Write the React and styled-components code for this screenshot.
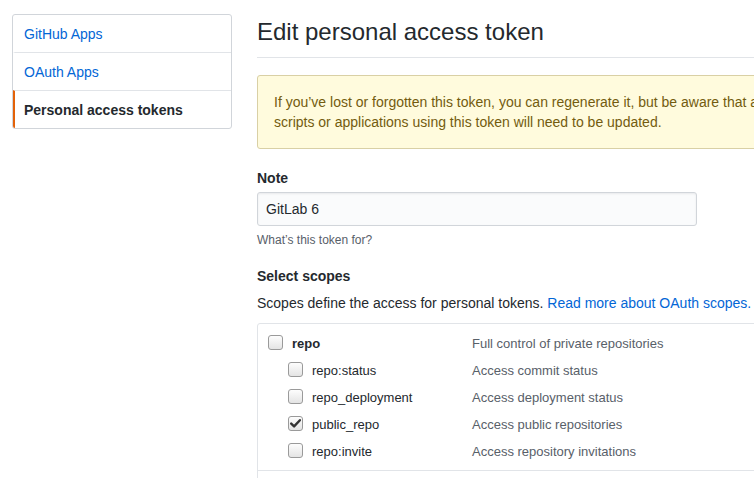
import React from "react";
import styled, { createGlobalStyle } from "styled-components";

const GlobalStyle = createGlobalStyle`
  html, body {
    margin: 0;
    padding: 0;
    background: #fff;
    overflow: hidden;
  }
  body {
    font-family: "Liberation Sans", Arial, sans-serif;
    font-size: 14px;
    line-height: 1.5;
    color: #24292e;
  }
`;

const menuItems = [
  { label: "GitHub Apps" },
  { label: "OAuth Apps" },
  { label: "Personal access tokens", selected: true },
];

const scopes = [
  { name: "repo", desc: "Full control of private repositories", parent: true },
  { name: "repo:status", desc: "Access commit status" },
  { name: "repo_deployment", desc: "Access deployment status" },
  { name: "public_repo", desc: "Access public repositories", checked: true },
  { name: "repo:invite", desc: "Access repository invitations" },
];

const Checkbox = ({ checked }) => (
  <Box>
    {checked && (
      <svg width="13" height="13" viewBox="0 0 13 13">
        <path
          d="M2.2 6.6 L5.1 9.4 L10.9 3.2"
          fill="none"
          stroke="#333"
          strokeWidth="2.4"
          strokeLinecap="round"
          strokeLinejoin="round"
        />
      </svg>
    )}
  </Box>
);

export default function App() {
  return (
    <>
      <GlobalStyle />
      <Page>
        <Sidebar>
          {menuItems.map((item) => (
            <MenuItem key={item.label} selected={item.selected}>
              {item.label}
            </MenuItem>
          ))}
        </Sidebar>
        <Main>
          <Subhead>
            <h2>Edit personal access token</h2>
          </Subhead>
          <Flash>
            If you’ve lost or forgotten this token, you can regenerate it, but
            be aware that any scripts or applications using this token will
            need to be updated.
          </Flash>
          <FormGroup>
            <Label>Note</Label>
            <Input defaultValue="GitLab 6" readOnly />
            <Note>What’s this token for?</Note>
          </FormGroup>
          <FormGroup>
            <Label>Select scopes</Label>
            <Lead>
              Scopes define the access for personal tokens.{" "}
              <a href="#">Read more about OAuth scopes.</a>
            </Lead>
            <ScopeTable>
              <ScopeGroup>
                {scopes.map((s) => (
                  <ScopeRow key={s.name}>
                    <ScopeName child={!s.parent}>
                      <Checkbox checked={s.checked} />
                      <ScopeLabel bold={s.parent}>{s.name}</ScopeLabel>
                    </ScopeName>
                    <ScopeDesc>{s.desc}</ScopeDesc>
                  </ScopeRow>
                ))}
              </ScopeGroup>
              <ScopeGroup>
                <ScopeRow>
                  <ScopeName>
                    <Checkbox />
                    <ScopeLabel bold>admin:org</ScopeLabel>
                  </ScopeName>
                  <ScopeDesc>Full control of orgs and teams</ScopeDesc>
                </ScopeRow>
              </ScopeGroup>
            </ScopeTable>
          </FormGroup>
        </Main>
      </Page>
    </>
  );
}

const Page = styled.div`
  display: flex;
  align-items: flex-start;
  gap: 25px;
  padding: 14px 0 0 12px;
  width: 1000px;
`;

const Sidebar = styled.nav`
  width: 220px;
  flex-shrink: 0;
  border: 1px solid #d1d5da;
  border-radius: 3px;
  box-sizing: border-box;
  overflow: hidden;
`;

const MenuItem = styled.a`
  display: block;
  height: 38px;
  box-sizing: border-box;
  padding: 9px 10px 7px 9px;
  line-height: 20px;
  font-size: 14px;
  color: ${(p) => (p.selected ? "#24292e" : "#0366d6")};
  font-weight: ${(p) => (p.selected ? "bold" : "normal")};
  border-left: 2px solid ${(p) => (p.selected ? "#e36209" : "transparent")};
  & + & {
    border-top: 1px solid #e1e4e8;
  }
  &:first-child {
    height: 37px;
  }
`;

const Main = styled.div`
  width: 556px;
  flex-shrink: 0;
`;

const Subhead = styled.div`
  margin-top: 3px;
  padding-bottom: 10px;
  border-bottom: 1px solid #e1e4e8;
  width: 720px;
  h2 {
    margin: 0;
    font-size: 24px;
    font-weight: normal;
    line-height: 30px;
  }
`;

const Flash = styled.div`
  margin-top: 17px;
  padding: 16px 44px 16px 16px;
  background: #fffbdd;
  border: 1px solid #d9d0a5;
  border-radius: 3px;
  color: #735c0f;
  font-size: 14px;
  line-height: 20px;
  box-sizing: border-box;
  width: 580px;
`;

const FormGroup = styled.div`
  margin-top: 19px;
  & + & {
    margin-top: 17px;
  }
`;

const Label = styled.label`
  display: block;
  font-weight: bold;
  font-size: 14px;
  line-height: 20px;
  margin-bottom: 4px;
`;

const Input = styled.input`
  display: block;
  width: 440px;
  height: 34px;
  box-sizing: border-box;
  padding: 6px 8px;
  font-family: inherit;
  font-size: 14px;
  line-height: 20px;
  color: #24292e;
  background: #fafbfc;
  border: 1px solid #d1d5da;
  border-radius: 3px;
  box-shadow: inset 0 1px 2px rgba(27, 31, 35, 0.075);
  outline: none;
`;

const Note = styled.p`
  margin: 5px 0 0;
  font-size: 12px;
  line-height: 18px;
  color: #586069;
`;

const Lead = styled.p`
  margin: 7px 0 0;
  font-size: 14px;
  line-height: 20px;
  a {
    color: #0366d6;
    text-decoration: none;
  }
`;

const ScopeTable = styled.div`
  margin-top: 10px;
  width: 720px;
  border: 1px solid #e1e4e8;
  border-radius: 3px;
`;

const ScopeGroup = styled.div`
  padding: 6px 0 5px;
  & + & {
    border-top: 1px solid #e1e4e8;
  }
`;

const ScopeRow = styled.div`
  display: grid;
  grid-template-columns: 214px 1fr;
  align-items: center;
  height: 27px;
  font-size: 13px;
  line-height: 20px;
`;

const ScopeName = styled.div`
  display: flex;
  align-items: center;
  gap: 9px;
  padding-left: ${(p) => (p.child ? "30px" : "10px")};
`;

const Box = styled.span`
  display: inline-flex;
  align-items: center;
  justify-content: center;
  width: 15px;
  height: 15px;
  box-sizing: border-box;
  border: 1px solid #9a9a9a;
  border-radius: 3px;
  background: linear-gradient(#fdfdfd, #e4e4e4);
  margin-top: -3px;
`;

const ScopeLabel = styled.span`
  color: #24292e;
  font-weight: ${(p) => (p.bold ? "bold" : "normal")};
`;

const ScopeDesc = styled.span`
  color: #586069;
`;
